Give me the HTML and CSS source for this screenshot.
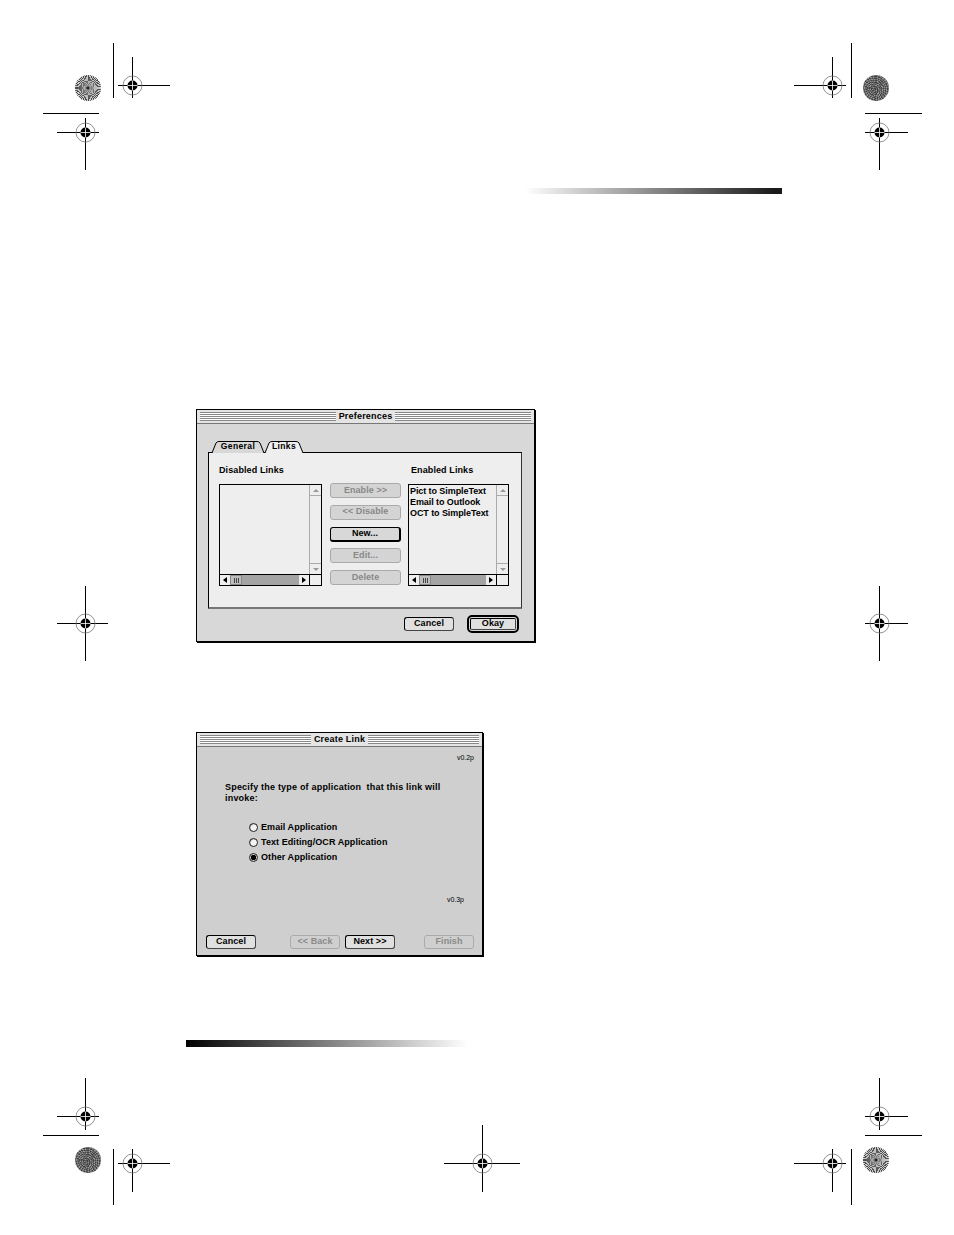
FILE: index.html
```html
<!DOCTYPE html>
<html lang="en">
<head>
<meta charset="utf-8">
<title>Preferences and Create Link</title>
<link rel="stylesheet" href="styles.css">
</head>
<body>
<main class="page">
  <svg class="marks" width="954" height="1235" viewBox="0 0 954 1235" aria-hidden="true">
    <defs>
      <g id="target">
        <circle r="9.5" fill="none" stroke="#777" stroke-width="0.8"/>
        <circle r="5" fill="#000"/>
        <path d="M-5 0H5M0-5V5" stroke="#fff" stroke-width="0.8"/>
      </g>
    </defs>
    <path class="mark-line" d="M113.5 43V98M118 85.5H170M132.5 57V98M43 113.5H99M57 132.5H99M85.5 118V170
      M851.5 43V98M794 85.5H846M832.5 57V98M865 113.5H922M865 132.5H908M879.5 118V170
      M57 1116.5H99M85.5 1078V1130M43 1135.5H99M118 1163.5H170M132.5 1149V1192M113.5 1149V1205
      M865 1116.5H908M879.5 1078V1130M865 1135.5H922M794 1163.5H846M832.5 1149V1192M851.5 1149V1205
      M57 623.5H108M85.5 586V661M865 623.5H908M879.5 586V661M444 1163.5H520M482.5 1125V1192"/>
    <use href="#target" x="132.5" y="85.5"/>
    <use href="#target" x="85.5" y="132.5"/>
    <use href="#target" x="832.5" y="85.5"/>
    <use href="#target" x="879.5" y="132.5"/>
    <use href="#target" x="85.5" y="1116.5"/>
    <use href="#target" x="132.5" y="1163.5"/>
    <use href="#target" x="879.5" y="1116.5"/>
    <use href="#target" x="832.5" y="1163.5"/>
    <use href="#target" x="85.5" y="623.5"/>
    <use href="#target" x="879.5" y="623.5"/>
    <use href="#target" x="482.5" y="1163.5"/>
  </svg>

  <div class="disc burst disc-tl"></div>
  <div class="disc solid disc-tr"></div>
  <div class="disc solid disc-bl"></div>
  <div class="disc burst disc-br"></div>

  <div class="fade fade-top"></div>
  <div class="fade fade-bottom"></div>

  <section class="window window-prefs">
    <header class="titlebar"><span class="grip"></span><h1 class="title">Preferences</h1><span class="grip"></span></header>
    <div class="prefs-body">
      <div class="tabs">
        <div class="tab tab-general">
          <svg class="tab-shape" viewBox="0 0 52 12" preserveAspectRatio="none"><path d="M0 12L4 2Q5 .5 7 .5H45Q47 .5 48 2L52 12" fill="#d8d8d8" stroke="#000"/></svg>
          <span class="tab-label">General</span>
        </div>
        <div class="tab tab-links">
          <svg class="tab-shape" viewBox="0 0 38 12" preserveAspectRatio="none"><path d="M0 12L4 2Q5 .5 7 .5H31Q33 .5 34 2L38 12" fill="#eee" stroke="#000"/></svg>
          <span class="tab-label">Links</span>
        </div>
      </div>
      <div class="panel">
        <div class="col-head">Disabled Links</div>
        <div></div>
        <div class="col-head col-head-right">Enabled Links</div>

        <div class="listbox">
          <div class="list-items"></div>
          <div class="vscroll"><span class="sb-cap sb-up"><i class="arrow arrow-up"></i></span><span class="sb-cap sb-down"><i class="arrow arrow-down"></i></span></div>
          <div class="hscroll"><span class="sb-h-cap"><i class="arrow arrow-left"></i></span><span class="thumb"><i></i><i></i><i></i></span><span class="track"></span><span class="sb-h-cap sb-h-right"><i class="arrow arrow-right"></i></span></div>
          <div class="corner"></div>
        </div>

        <div class="action-col">
          <div class="btn btn-off">Enable &gt;&gt;</div>
          <div class="btn btn-off">&lt;&lt; Disable</div>
          <div class="btn btn-strong">New...</div>
          <div class="btn btn-off">Edit...</div>
          <div class="btn btn-off">Delete</div>
        </div>

        <div class="listbox">
          <div class="list-items">
            <div>Pict to SimpleText</div>
            <div>Email to Outlook</div>
            <div>OCT to SimpleText</div>
          </div>
          <div class="vscroll"><span class="sb-cap sb-up"><i class="arrow arrow-up"></i></span><span class="sb-cap sb-down"><i class="arrow arrow-down"></i></span></div>
          <div class="hscroll"><span class="sb-h-cap"><i class="arrow arrow-left"></i></span><span class="thumb"><i></i><i></i><i></i></span><span class="track"></span><span class="sb-h-cap sb-h-right"><i class="arrow arrow-right"></i></span></div>
          <div class="corner"></div>
        </div>
      </div>
      <div class="prefs-foot">
        <div class="btn btn-normal btn-cancel">Cancel</div>
        <div class="default-ring"><div class="btn btn-normal btn-okay">Okay</div></div>
      </div>
    </div>
  </section>

  <section class="window window-link">
    <header class="titlebar"><span class="grip"></span><h1 class="title">Create Link</h1><span class="grip"></span></header>
    <div class="link-body">
      <div class="version version-a">v0.2p</div>
      <p class="prompt">Specify the type of application&nbsp; that this link will invoke:</p>
      <div class="radios">
        <div class="radio"><span class="dot"></span>Email Application</div>
        <div class="radio"><span class="dot"></span>Text Editing/OCR Application</div>
        <div class="radio"><span class="dot dot-on"></span>Other Application</div>
      </div>
      <div class="version version-b">v0.3p</div>
      <div class="link-foot">
        <div class="btn btn-normal btn-wide">Cancel</div>
        <div class="nav-pair">
          <div class="btn btn-ghost btn-wide">&lt;&lt; Back</div>
          <div class="btn btn-normal btn-wide">Next &gt;&gt;</div>
        </div>
        <div class="btn btn-ghost btn-wide">Finish</div>
      </div>
    </div>
  </section>
</main>
</body>
</html>
```
FILE: styles.css
```css
* { box-sizing: border-box; }
html, body { margin: 0; padding: 0; background: #fff; }
body { font-family: "Liberation Sans", Arial, sans-serif; font-weight: 700; font-size: 9px; color: #000; }

.page { position: relative; width: 954px; height: 1235px; overflow: hidden; background: #fff; }

.marks { position: absolute; left: 0; top: 0; }
.mark-line { fill: none; stroke: #000; stroke-width: 1; }

.disc { position: absolute; width: 26px; height: 26px; border-radius: 50%; }
.burst {
  background:
    radial-gradient(circle, #222 0 1px, rgba(150,150,150,.9) 2px, rgba(150,150,150,.5) 7px, rgba(150,150,150,.15) 13px),
    repeating-conic-gradient(#333 0 4deg, #ddd 4deg 8deg);
}
.solid {
  background:
    repeating-radial-gradient(circle at 40% 60%, rgba(0,0,0,.22) 0 1px, rgba(255,255,255,.12) 1px 2px),
    repeating-conic-gradient(#555 0 7deg, #858585 7deg 13deg);
}
.disc-tl { left: 75px; top: 75px; }
.disc-tr { left: 863px; top: 75px; }
.disc-bl { left: 75px; top: 1147px; }
.disc-br { left: 863px; top: 1147px; }

.fade { position: absolute; }
.fade-top { left: 525px; top: 188px; width: 257px; height: 6px; background: linear-gradient(90deg, #fff, #1a1a1a 97%); }
.fade-bottom { left: 186px; top: 1040px; width: 282px; height: 7px; background: linear-gradient(90deg, #000, #fff); }

.window { position: absolute; border: 1px solid #000; box-shadow: 1px 1px 0 #000; display: flex; flex-direction: column; }
.window-prefs { left: 196px; top: 409px; width: 339px; height: 233px; background: #d8d8d8; }
.window-link { left: 196px; top: 732px; width: 287px; height: 224px; background: #cfcfcf; }

.titlebar { height: 14px; flex: none; display: flex; align-items: center; gap: 3px; padding: 0 3px; background: #e4e4e4; border-bottom: 1px solid #777; }
.grip { flex: 1; height: 9px; background: repeating-linear-gradient(180deg, #888 0 1px, #fff 1px 2px); }
.title { margin: 0 0 1px; font-size: 9px; font-weight: 700; line-height: 11px; letter-spacing: .2px; }

.prefs-body { flex: 1; padding: 17px 12px 0 11px; display: flex; flex-direction: column; }

.tabs { height: 11px; flex: none; display: flex; padding-left: 4px; gap: 1px; }
.tab { position: relative; height: 12px; display: flex; align-items: center; justify-content: center; padding-bottom: 2px; }
.tab-general { width: 52px; }
.tab-links { width: 38px; }
.tab-shape { position: absolute; left: 0; top: 0; width: 100%; height: 100%; overflow: visible; }
.tab-label { position: relative; font-size: 8.5px; line-height: 10px; letter-spacing: .4px; }

.panel {
  height: 157px;
  flex: none;
  background: #eee;
  border: 1px solid #000;
  border-right-color: #333;
  border-bottom: 2px solid #777;
  padding: 10px 12px 0 10px;
  display: grid;
  grid-template-columns: 103px 86px 101px;
  grid-template-rows: 14px 102px;
  row-gap: 7px;
}
.col-head { font-size: 9px; line-height: 14px; letter-spacing: .1px; }
.col-head-right { padding-left: 3px; }

.listbox { display: grid; grid-template-columns: 1fr 12px; grid-template-rows: 1fr 11px; border: 1px solid #000; background: #eee; min-height: 0; }
.list-items { padding: 1px 0 0 1px; font-size: 9px; line-height: 11px; letter-spacing: -.08px; white-space: nowrap; overflow: hidden; }
.vscroll { border-left: 1px solid #aaa; display: flex; flex-direction: column; justify-content: space-between; }
.sb-cap { height: 11px; display: flex; align-items: center; justify-content: center; }
.sb-up { border-bottom: 1px solid #aaa; }
.sb-down { border-top: 1px solid #aaa; }
.hscroll { border-top: 1px solid #000; display: flex; min-width: 0; }
.corner { border-top: 1px solid #000; border-left: 1px solid #000; }
.sb-h-cap { width: 10px; flex: none; display: flex; align-items: center; justify-content: center; background: #eee; }
.sb-h-right { width: 10px; }
.thumb { width: 12px; flex: none; background: #bdbdbd; border: 1px solid #888; display: flex; align-items: center; justify-content: center; gap: 1px; }
.thumb i { width: 1px; height: 5px; background: #444; }
.track { flex: 1; background: #a4a4a4; }

.arrow { display: block; width: 0; height: 0; border-style: solid; border-color: transparent; }
.arrow-up { border-width: 0 3px 3px; border-bottom-color: #999; }
.arrow-down { border-width: 3px 3px 0; border-top-color: #999; }
.arrow-left { border-width: 3px 4px 3px 0; border-right-color: #000; }
.arrow-right { border-width: 3px 0 3px 4px; border-left-color: #000; }

.action-col { display: flex; flex-direction: column; gap: 6.75px; margin: -1px 7px 0 8px; }
.btn { display: flex; align-items: center; justify-content: center; border-radius: 3px; font-size: 9px; line-height: 11px; letter-spacing: .08px; white-space: nowrap; padding-bottom: 1px; }
.action-col .btn { height: 15px; }
.btn-off { border: 1px solid #aaa; background: #d4d4d4; color: #888; }
.btn-strong { border: 1px solid #000; border-right-width: 2px; border-bottom-width: 2px; background: #d8d8d8; }
.btn-normal { border: 1px solid #000; background: #e0e0e0; border-right-color: #444; border-bottom-color: #444; }
.btn-ghost { border: 1px solid #aaa; background: transparent; color: #8a8a8a; }

.prefs-foot { flex: 1; display: flex; align-items: center; justify-content: flex-end; gap: 13px; padding: 0 3px 2px 0; }
.btn-cancel { width: 50px; height: 14px; }
.default-ring { width: 52px; height: 18px; border: 2px solid #000; border-radius: 5px; padding: 1px; }
.btn-okay { width: 100%; height: 100%; border-radius: 2px; }

.link-body { flex: 1; display: flex; flex-direction: column; padding: 6px 8px 6px 9px; }
.version { font-weight: 400; font-size: 7px; line-height: 9px; text-align: right; }
.version-b { margin-top: 32px; padding-right: 10px; }
.prompt { margin: 20px 0 0 19px; width: 235px; font-size: 9px; line-height: 11px; letter-spacing: .2px; }
.radios { margin: 18px 0 0 43px; display: flex; flex-direction: column; gap: 4px; }
.radio { display: flex; align-items: center; height: 11px; line-height: 11px; letter-spacing: .07px; }
.dot { width: 9px; height: 9px; border-radius: 50%; margin-right: 3px; flex: none; border: 1px solid #222; background: radial-gradient(circle at 60% 60%, #f4f4f4 0 3px, #999 5px); }
.dot-on { background: radial-gradient(circle, #000 0 2.5px, #ccc 3px); }

.link-foot { margin-top: auto; display: flex; justify-content: space-between; align-items: center; }
.btn-wide { width: 50px; height: 14px; }
.nav-pair { display: flex; gap: 5px; margin-left: 5px; }
```
